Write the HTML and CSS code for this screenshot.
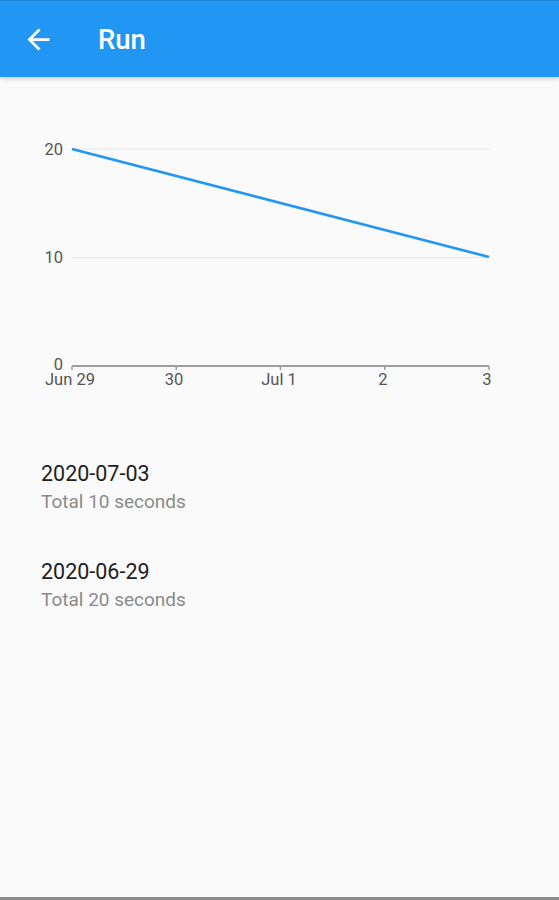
FILE: index.html
```html
<!DOCTYPE html>
<html lang="en">
<head>
  <meta charset="UTF-8" />
  <meta name="viewport" content="width=device-width, initial-scale=1.0">
  <title>Run</title>
  <link rel="stylesheet" href="styles.css">
</head>
<body>
  <div class="screen">
    <header class="app-bar">
      <button class="back-button" aria-label="Back">
        <svg width="33" height="33" viewBox="0 0 24 24">
          <path d="M20 11H7.83l5.59-5.59L12 4l-8 8 8 8 1.41-1.41L7.83 13H20v-2z" fill="#fff"/>
        </svg>
      </button>
      <h1 class="title">Run</h1>
    </header>

    <main class="content">
      <div class="chart">
        <svg width="559" height="320" viewBox="0 77 559 320">
          <line class="grid" x1="72" y1="149" x2="489" y2="149"/>
          <line class="grid" x1="72" y1="257.5" x2="489" y2="257.5"/>
          <text class="y-label" x="63" y="154.5">20</text>
          <text class="y-label" x="63" y="263">10</text>
          <text class="y-label" x="63" y="370">0</text>

          <line class="axis" x1="72" y1="366" x2="489" y2="366"/>
          <line class="tick" x1="72" y1="366" x2="72" y2="370"/>
          <line class="tick" x1="176.25" y1="366" x2="176.25" y2="370"/>
          <line class="tick" x1="280.5" y1="366" x2="280.5" y2="370"/>
          <line class="tick" x1="384.75" y1="366" x2="384.75" y2="370"/>
          <line class="tick" x1="489" y1="366" x2="489" y2="370"/>
          <text class="x-label" x="70" y="385">Jun 29</text>
          <text class="x-label" x="174" y="385">30</text>
          <text class="x-label" x="279" y="385">Jul 1</text>
          <text class="x-label" x="383" y="385">2</text>
          <text class="x-label" x="487" y="385">3</text>

          <polyline class="series" points="72,149 489,257"/>
        </svg>
      </div>

      <ul class="run-list">
        <li class="run-item">
          <div class="run-date">2020-07-03</div>
          <div class="run-total">Total 10 seconds</div>
        </li>
        <li class="run-item">
          <div class="run-date">2020-06-29</div>
          <div class="run-total">Total 20 seconds</div>
        </li>
      </ul>
    </main>

    <div class="bottom-edge"></div>
  </div>
</body>
</html>
```

FILE: styles.css
```css
html, body {
  margin: 0;
  padding: 0;
}
body {
  font-family: Roboto, "Noto Sans", Arial, sans-serif;
  background-color: #fafafa;
  color: #212121;
}
.screen {
  display: flex;
  flex-direction: column;
  height: 900px;
}
.app-bar {
  display: flex;
  align-items: center;
  height: 77px;
  flex-shrink: 0;
  background-color: #2196f3;
  border-top: 1px solid #1a86dd;
  box-sizing: border-box;
  box-shadow: 0 2px 4px rgba(0, 0, 0, 0.18);
  position: relative;
  z-index: 1;
}
.back-button {
  display: flex;
  align-items: center;
  justify-content: center;
  width: 77px;
  height: 77px;
  padding: 0;
  background: none;
  border: none;
  cursor: pointer;
}
.title {
  margin: 1px 0 0 21px;
  font-size: 27.5px;
  font-weight: 500;
  color: #fff;
}
.content {
  flex: 1;
}
.chart svg {
  display: block;
}
.grid {
  stroke: #e6e6e6;
  stroke-width: 1.2;
}
.axis {
  stroke: #9e9e9e;
  stroke-width: 2;
}
.tick {
  stroke: #9e9e9e;
  stroke-width: 1.5;
}
.y-label {
  font-size: 16.5px;
  fill: #555;
  text-anchor: end;
}
.x-label {
  font-size: 16.5px;
  fill: #555;
  text-anchor: middle;
}
.series {
  fill: none;
  stroke: #2196f3;
  stroke-width: 2.6;
}
.run-list {
  list-style: none;
  margin: 0;
  padding: 52px 0 0 0;
}
.run-item {
  padding: 11px 41px;
  height: 76px;
}
.run-date {
  font-size: 21.5px;
  line-height: 28px;
  color: #212121;
}
.run-total {
  font-size: 19px;
  line-height: 28px;
  color: #8a8a8a;
}
.bottom-edge {
  height: 3px;
  flex-shrink: 0;
  border-top: 1px solid #fff;
  background-color: #8c8c8c;
}
```
